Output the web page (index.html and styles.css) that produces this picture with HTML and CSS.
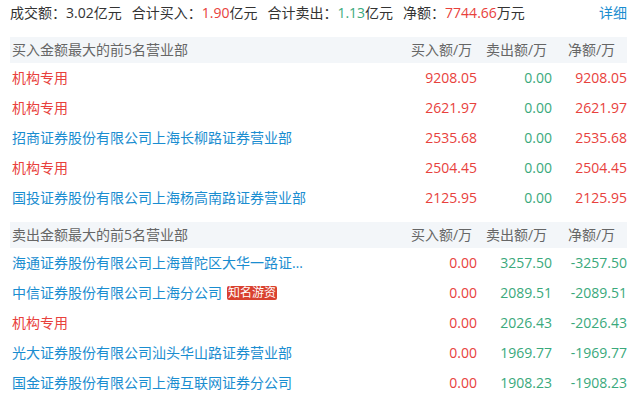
FILE: index.html
```html
<!DOCTYPE html>
<html lang="zh-CN">
<head>
  <meta charset="UTF-8" />
  <meta name="viewport" content="width=device-width, initial-scale=1.0" />
  <title>龙虎榜</title>
  <link rel="stylesheet" href="styles.css">
</head>
<body>
  <div class="page">
    <div class="summary">
      <span class="item">成交额：3.02亿元</span>
      <span class="item">合计买入：<span class="up">1.90</span>亿元</span>
      <span class="item">合计卖出：<span class="down">1.13</span>亿元</span>
      <span class="item">净额：<span class="up">7744.66</span>万元</span>
      <a class="more" href="#">详细</a>
    </div>

    <div class="table">
      <div class="head">
        <div class="name">买入金额最大的前5名营业部</div>
        <div class="col">买入额/万</div>
        <div class="col">卖出额/万</div>
        <div class="col">净额/万</div>
      </div>
      <div class="row">
        <div class="name"><span class="dept inst">机构专用</span></div>
        <div class="num up">9208.05</div>
        <div class="num down">0.00</div>
        <div class="num up">9208.05</div>
      </div>
      <div class="row">
        <div class="name"><span class="dept inst">机构专用</span></div>
        <div class="num up">2621.97</div>
        <div class="num down">0.00</div>
        <div class="num up">2621.97</div>
      </div>
      <div class="row">
        <div class="name"><span class="dept">招商证券股份有限公司上海长柳路证券营业部</span></div>
        <div class="num up">2535.68</div>
        <div class="num down">0.00</div>
        <div class="num up">2535.68</div>
      </div>
      <div class="row">
        <div class="name"><span class="dept inst">机构专用</span></div>
        <div class="num up">2504.45</div>
        <div class="num down">0.00</div>
        <div class="num up">2504.45</div>
      </div>
      <div class="row">
        <div class="name"><span class="dept">国投证券股份有限公司上海杨高南路证券营业部</span></div>
        <div class="num up">2125.95</div>
        <div class="num down">0.00</div>
        <div class="num up">2125.95</div>
      </div>
    </div>

    <div class="table sell">
      <div class="head">
        <div class="name">卖出金额最大的前5名营业部</div>
        <div class="col">买入额/万</div>
        <div class="col">卖出额/万</div>
        <div class="col">净额/万</div>
      </div>
      <div class="row">
        <div class="name"><span class="dept">海通证券股份有限公司上海普陀区大华一路证券营业部</span></div>
        <div class="num up">0.00</div>
        <div class="num down">3257.50</div>
        <div class="num down">-3257.50</div>
      </div>
      <div class="row">
        <div class="name"><span class="dept">中信证券股份有限公司上海分公司</span><span class="tag">知名游资</span></div>
        <div class="num up">0.00</div>
        <div class="num down">2089.51</div>
        <div class="num down">-2089.51</div>
      </div>
      <div class="row">
        <div class="name"><span class="dept inst">机构专用</span></div>
        <div class="num up">0.00</div>
        <div class="num down">2026.43</div>
        <div class="num down">-2026.43</div>
      </div>
      <div class="row">
        <div class="name"><span class="dept">光大证券股份有限公司汕头华山路证券营业部</span></div>
        <div class="num up">0.00</div>
        <div class="num down">1969.77</div>
        <div class="num down">-1969.77</div>
      </div>
      <div class="row">
        <div class="name"><span class="dept">国金证券股份有限公司上海互联网证券分公司</span></div>
        <div class="num up">0.00</div>
        <div class="num down">1908.23</div>
        <div class="num down">-1908.23</div>
      </div>
    </div>
  </div>
</body>
</html>
```

FILE: styles.css
```css
:root {
  --red: #e8413c;
  --green: #3aa97c;
  --blue: #1a8dd0;
  --text: #333;
  --gray: #666;
  --band: #f3f6f9;
}
* { box-sizing: border-box; }
html, body {
  margin: 0; padding: 0;
  background: #fff;
  font-family: "Open Sans", "Noto Sans CJK SC", sans-serif;
  font-size: 14px;
  color: var(--text);
}
.page {
  padding: 0 6px 0 10px;
}
.summary {
  display: flex; align-items: center;
  height: 25px; line-height: 25px;
  white-space: nowrap;
}
.summary .item { margin-right: 10px; }
.summary .more {
  margin-left: auto; margin-right: 0;
  color: var(--blue); text-decoration: none;
}
.up { color: var(--red); }
.down { color: var(--green); }

.table { margin-top: 12px; }
.table.sell { margin-top: 9px; }
.head, .row {
  display: grid;
  grid-template-columns: 1fr 75px 75px 75px;
  align-items: center;
}
.head {
  height: 26px; line-height: 26px;
  background: var(--band);
  color: var(--gray);
}
.head .name { padding-left: 2px; }
.head .col { text-align: center; padding-left: 4px; }
.row { height: 30px; line-height: 30px; }
.row .name {
  display: flex; align-items: center;
  padding-left: 2px; min-width: 0;
}
.dept {
  color: var(--blue);
  max-width: 300px;
  overflow: hidden; white-space: nowrap; text-overflow: ellipsis;
}
.dept.inst { color: var(--red); }
.tag {
  margin-left: 5px;
  height: 14px; line-height: 14px;
  padding: 0 1px;
  font-size: 12px;
  color: #fff; background: #d9412f;
  border-radius: 2px;
}
.num { text-align: right; }
```
